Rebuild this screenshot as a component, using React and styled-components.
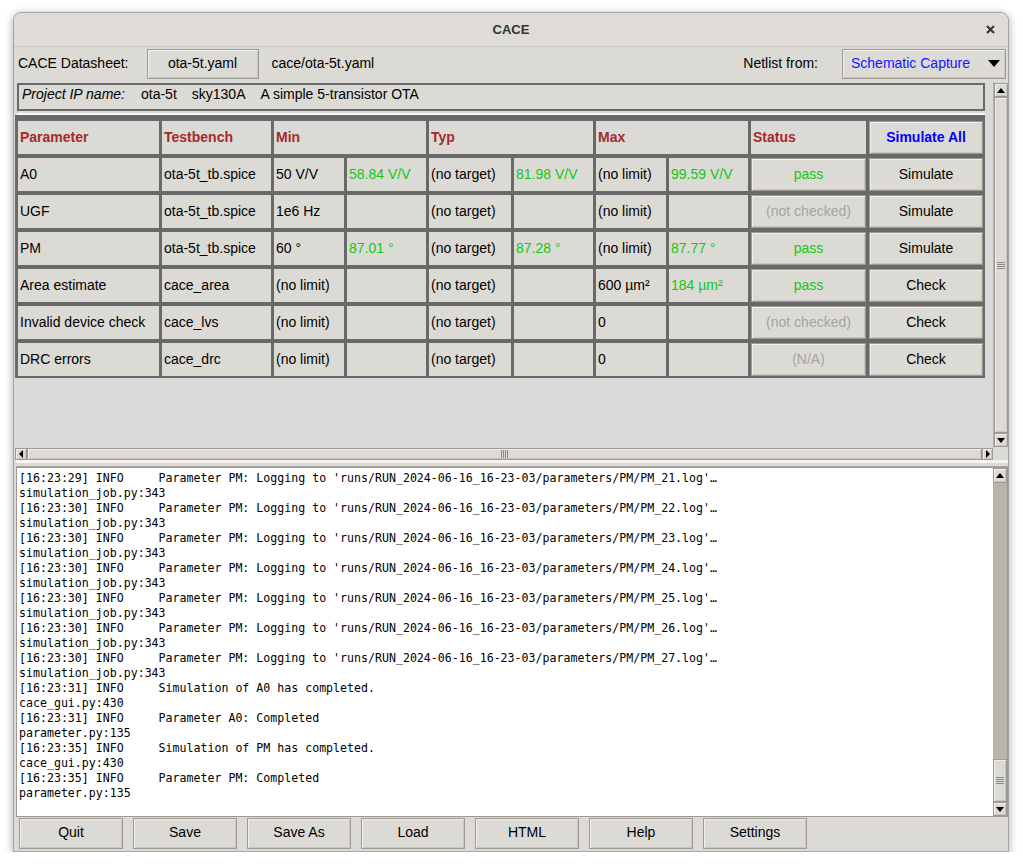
import React from "react";
import styled, { createGlobalStyle, css } from "styled-components";

const GlobalStyle = createGlobalStyle`
  body {
    margin: 0;
    background: #ffffff;
    font-family: "Liberation Sans", Arial, sans-serif;
  }
`

const Screen = styled.div`
  padding: 12px 0 0 13px;
`

const Window = styled.div`
  width: 996px;
  height: 840px;
  box-sizing: border-box;
  background: #dcdad5;
  border: 1px solid #aaa7a2;
  border-radius: 8px 8px 0 0;
  box-shadow: 0 2px 9px rgba(0, 0, 0, 0.35);
  display: flex;
  flex-direction: column;
  overflow: hidden;
`

const TitleBar = styled.header`
  height: 34px;
  flex: none;
  box-sizing: border-box;
  padding-bottom: 1px;
  display: grid;
  grid-template-columns: 1fr auto 1fr;
  align-items: center;
  background: #dfdcd8;
  border-bottom: 1px solid #c9c6c1;
`

const Title = styled.h1`
  grid-column: 2;
  margin: 0;
  font-size: 13px;
  font-weight: bold;
  color: #2e3436;
`

const CloseButton = styled.span`
  justify-self: end;
  margin-right: 13px;
  display: flex;
`

const Toolbar = styled.div`
  height: 35px;
  flex: none;
  box-sizing: border-box;
  display: flex;
  align-items: flex-start;
  padding: 2px 2px 0 4px;
  font-size: 14px;
  color: #000;
`

const Label = styled.span`
  line-height: 29px;
  margin-left: ${p => p.gap || 0}px;
`

const ttkButton = css`
  box-sizing: border-box;
  background: #dcdad5;
  border: 1px solid #9e9a91;
  box-shadow: inset 1px 1px 0 #f1efeb, inset -1px -1px 0 #c9c6c0;
  font-family: "Liberation Sans", Arial, sans-serif;
  font-size: 14px;
  display: flex;
  align-items: center;
  justify-content: center;
`

const FileButton = styled.div`
  ${ttkButton}
  width: 112px;
  height: 30px;
  margin-left: 18px;
  padding-bottom: 2px;
`

const Spacer = styled.div`
  flex: 1;
`

const Combo = styled.div`
  ${ttkButton}
  width: 164px;
  height: 30px;
  margin-left: 24px;
  justify-content: space-between;
  padding: 0 5px 2px 8px;
  color: #1515ff;
`

const Arrow = styled.span`
  width: 0;
  height: 0;
  border-style: solid;
  ${p => p.dir === "down" && css`
    border-width: ${p.big ? 7 : 5}px ${p.big ? 6 : 4}px 0 ${p.big ? 6 : 4}px;
    border-color: #000 transparent transparent transparent;
  `}
  ${p => p.dir === "up" && css`
    border-width: 0 4px 5px 4px;
    border-color: transparent transparent #000 transparent;
  `}
  ${p => p.dir === "left" && css`
    border-width: 4px 4px 4px 0;
    border-color: transparent #000 transparent transparent;
  `}
  ${p => p.dir === "right" && css`
    border-width: 4px 0 4px 4px;
    border-color: transparent transparent transparent #000;
  `}
`

const UpperPane = styled.div`
  height: 378px;
  flex: none;
  margin-left: 1px;
  display: grid;
  grid-template-columns: 978px 15px;
  grid-template-rows: 366px 12px;
`

const Canvas = styled.div`
  background: #d9d9d9;
  overflow: hidden;
  padding-top: 1px;
`

const ProjectFrame = styled.div`
  margin-left: 2px;
  width: 968px;
  height: 28px;
  box-sizing: border-box;
  border: 2px solid #6a6a6a;
  background: #dcdad5;
  display: flex;
  gap: 15px;
  padding: 1px 0 0 3px;
  font-size: 14px;
`

const Italic = styled.span`
  font-style: italic;
  margin-right: 1px;
`

const Separator = styled.div`
  margin: 2px 0 0 2px;
  width: 968px;
  height: 2px;
  background: #f7f7f7;
`

const ParamGrid = styled.div`
  width: 970px;
  box-sizing: border-box;
  padding: 6px 2px 2px 3px;
  background: #696969;
  display: grid;
  grid-template-columns: 141px 109px 70px 79px 82px 79px 70px 79px 115px 114px;
  grid-auto-rows: 33px;
  column-gap: 3px;
  row-gap: 4px;
`

const Cell = styled.div`
  grid-column: span ${p => p.span || 1};
  background: #dcdad5;
  display: flex;
  align-items: center;
  padding: 0 0 1px 2px;
  font-size: 14px;
  font-weight: ${p => (p.head ? "bold" : "normal")};
  color: ${p => p.color || "#000"};
  white-space: nowrap;
  overflow: hidden;
`

const CellButton = styled.div`
  ${ttkButton}
  padding-bottom: 1px;
  color: ${p => p.color || "#000"};
  font-weight: ${p => (p.head ? "bold" : "normal")};
`

const VScroll = styled.div`
  display: flex;
  flex-direction: column;
  background: #dcdad5;
  border-left: 1px solid #b3b0aa;
  padding: 1px 0;
`

const ScrollButton = styled.div`
  ${ttkButton}
  flex: none;
  width: ${p => p.w || 14}px;
  height: ${p => p.h || 14}px;
`

const Thumb = styled.div`
  ${ttkButton}
  flex: ${p => (p.size ? "none" : 1)};
  height: ${p => (p.size ? `${p.size}px` : "auto")};
`

const Trough = styled.div`
  flex: 1;
  background: #bab5ab;
`

const GripH = styled.span`
  width: 8px;
  height: 7px;
  background: repeating-linear-gradient(to bottom, #8c8a85 0 1px, transparent 1px 2px);
`

const GripV = styled.span`
  width: 7px;
  height: 8px;
  background: repeating-linear-gradient(to right, #8c8a85 0 1px, transparent 1px 2px);
`

const HScroll = styled.div`
  display: flex;
  background: #dcdad5;
`

const Corner = styled.div`
  background: #dcdad5;
`

const Sash = styled.div`
  height: 7px;
  flex: none;
  box-sizing: border-box;
  border-top: 3px solid #f4f3f1;
  border-bottom: 1px solid #a9a6a0;
  margin-left: 2px;
  width: 992px;
`

const LogPane = styled.div`
  height: 350px;
  flex: none;
  margin-left: 2px;
  width: 992px;
  box-sizing: border-box;
  border: 1px solid #9e9a91;
  display: grid;
  grid-template-columns: 1fr 14px;
`

const LogText = styled.pre`
  margin: 0;
  padding: 3px 2px 0;
  background: #ffffff;
  font-family: "DejaVu Sans Mono", monospace;
  font-size: 11.6px;
  line-height: 15px;
  color: #000;
  overflow: hidden;
`

const LogScroll = styled.div`
  display: flex;
  flex-direction: column;
  background: #dcdad5;
`

const ButtonBar = styled.nav`
  flex: 1;
  display: flex;
  gap: 10px;
  padding: 1px 5px;
`

const BarButton = styled.div`
  ${ttkButton}
  width: 104px;
  height: 31px;
  padding-bottom: 4px;
`

const rows = [
  { name: "A0", tb: "ota-5t_tb.spice", min: "50 V/V", minRes: "58.84 V/V", typ: "(no target)", typRes: "81.98 V/V", max: "(no limit)", maxRes: "99.59 V/V", status: "pass", action: "Simulate" },
  { name: "UGF", tb: "ota-5t_tb.spice", min: "1e6 Hz", minRes: "", typ: "(no target)", typRes: "", max: "(no limit)", maxRes: "", status: "(not checked)", action: "Simulate" },
  { name: "PM", tb: "ota-5t_tb.spice", min: "60 °", minRes: "87.01 °", typ: "(no target)", typRes: "87.28 °", max: "(no limit)", maxRes: "87.77 °", status: "pass", action: "Simulate" },
  { name: "Area estimate", tb: "cace_area", min: "(no limit)", minRes: "", typ: "(no target)", typRes: "", max: "600 µm²", maxRes: "184 µm²", status: "pass", action: "Check" },
  { name: "Invalid device check", tb: "cace_lvs", min: "(no limit)", minRes: "", typ: "(no target)", typRes: "", max: "0", maxRes: "", status: "(not checked)", action: "Check" },
  { name: "DRC errors", tb: "cace_drc", min: "(no limit)", minRes: "", typ: "(no target)", typRes: "", max: "0", maxRes: "", status: "(N/A)", action: "Check" },
]

const GREEN = "#12c812"
const RED = "#a52a2a"
const GRAY = "#a4a4a4"

const logLines = []
for (let i = 21; i <= 27; i++) {
  const t = i === 21 ? "16:23:29" : "16:23:30"
  logLines.push(`[${t}] INFO     Parameter PM: Logging to 'runs/RUN_2024-06-16_16-23-03/parameters/PM/PM_${i}.log'…`)
  logLines.push("simulation_job.py:343")
}
logLines.push("[16:23:31] INFO     Simulation of A0 has completed.")
logLines.push("cace_gui.py:430")
logLines.push("[16:23:31] INFO     Parameter A0: Completed")
logLines.push("parameter.py:135")
logLines.push("[16:23:35] INFO     Simulation of PM has completed.")
logLines.push("cace_gui.py:430")
logLines.push("[16:23:35] INFO     Parameter PM: Completed")
logLines.push("parameter.py:135")

const buttons = ["Quit", "Save", "Save As", "Load", "HTML", "Help", "Settings"]

function App() {
  return (
    <Screen>
      <GlobalStyle />
      <Window>
        <TitleBar>
          <Title>CACE</Title>
          <CloseButton>
            <svg width="9" height="9" viewBox="0 0 9 9">
              <path d="M1 1 L8 8 M8 1 L1 8" stroke="#2e3436" strokeWidth="2" />
            </svg>
          </CloseButton>
        </TitleBar>

        <Toolbar>
          <Label>CACE Datasheet:</Label>
          <FileButton>ota-5t.yaml</FileButton>
          <Label gap={13}>cace/ota-5t.yaml</Label>
          <Spacer />
          <Label>Netlist from:</Label>
          <Combo>
            Schematic Capture
            <Arrow dir="down" big />
          </Combo>
        </Toolbar>

        <UpperPane>
          <Canvas>
            <ProjectFrame>
              <Italic>Project IP name:</Italic>
              <span>ota-5t</span>
              <span>sky130A</span>
              <span>A simple 5-transistor OTA</span>
            </ProjectFrame>
            <Separator />
            <ParamGrid>
              <Cell head color={RED}>Parameter</Cell>
              <Cell head color={RED}>Testbench</Cell>
              <Cell head color={RED} span={2}>Min</Cell>
              <Cell head color={RED} span={2}>Typ</Cell>
              <Cell head color={RED} span={2}>Max</Cell>
              <Cell head color={RED}>Status</Cell>
              <CellButton head color="#0000ff">Simulate All</CellButton>
              {rows.map(r => (
                <React.Fragment key={r.name}>
                  <Cell>{r.name}</Cell>
                  <Cell>{r.tb}</Cell>
                  <Cell>{r.min}</Cell>
                  <Cell color={GREEN}>{r.minRes}</Cell>
                  <Cell>{r.typ}</Cell>
                  <Cell color={GREEN}>{r.typRes}</Cell>
                  <Cell>{r.max}</Cell>
                  <Cell color={GREEN}>{r.maxRes}</Cell>
                  <CellButton color={r.status === "pass" ? GREEN : GRAY}>{r.status}</CellButton>
                  <CellButton>{r.action}</CellButton>
                </React.Fragment>
              ))}
            </ParamGrid>
          </Canvas>

          <VScroll>
            <ScrollButton><Arrow dir="up" /></ScrollButton>
            <Thumb><GripH /></Thumb>
            <ScrollButton><Arrow dir="down" /></ScrollButton>
          </VScroll>

          <HScroll>
            <ScrollButton w={12} h={12}><Arrow dir="left" /></ScrollButton>
            <Thumb><GripV /></Thumb>
            <ScrollButton w={11} h={12}><Arrow dir="right" /></ScrollButton>
          </HScroll>
          <Corner />
        </UpperPane>

        <Sash />

        <LogPane>
          <LogText>{logLines.join("\n")}</LogText>
          <LogScroll>
            <ScrollButton h={15}><Arrow dir="up" /></ScrollButton>
            <Trough />
            <Thumb size={43}><GripH /></Thumb>
            <ScrollButton><Arrow dir="down" /></ScrollButton>
          </LogScroll>
        </LogPane>

        <ButtonBar>
          {buttons.map(b => (
            <BarButton key={b}>{b}</BarButton>
          ))}
        </ButtonBar>
      </Window>
    </Screen>
  )
}

export default App
